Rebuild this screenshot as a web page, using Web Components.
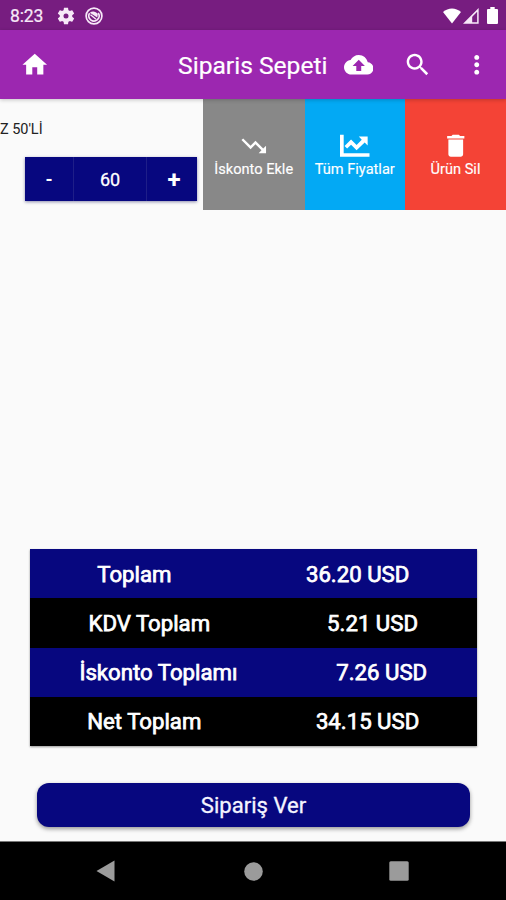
<!DOCTYPE html>
<html lang="tr">
<head>
<meta charset="utf-8">
<title>Siparis Sepeti</title>
<style>
  html, body {
    margin: 0;
    height: 100%;
    overflow: hidden;
    font-family: Roboto, "Liberation Sans", sans-serif;
    background: #fafafa;
  }
</style>
</head>
<body>
<siparis-app></siparis-app>

<template id="md-icon">
  <style>
    :host { display: block; flex: none; width: 29.5px; height: 29.5px; color: #fff; }
    svg { display: block; width: 100%; height: 100%; fill: currentColor; }
  </style>
  <svg viewBox="0 0 24 24"><path fill-rule="evenodd"></path></svg>
</template>

<template id="status-bar">
  <style>
    :host { display: flex; align-items: center; height: 30px; box-sizing: border-box; padding: 1px 8px 0 10px; background: #771d80; color: #f7e9f8; }
    .time { font-size: 17.5px; width: 46px; letter-spacing: -0.1px; -webkit-text-stroke: .2px #f7e9f8; }
    svg { display: block; flex: none; }
    md-icon { width: 20px; height: 20px; color: #f7e9f8; }
    .app { margin-left: 8.5px; }
    .wifi { margin-left: auto; }
    .signal { margin-left: 2px; }
    .battery { margin-left: 8px; }
  </style>
  <span class="time">8:23</span>
  <md-icon name="settings"></md-icon>
  <svg class="app" width="18" height="18" viewBox="0 0 18 18" fill="none" stroke="#f7e9f8">
    <circle cx="9" cy="9" r="7.9" stroke-width="1.7"/>
    <path d="M4.6 6.2a5.1 5.1 0 1 0 8.600-.2" stroke-width="1.6"/>
    <path d="M4.800 5.800c2.600-2.200 6-1.500 8 1.300l-.5 3.400z" fill="#f7e9f8" stroke="none"/>
    <path d="M5.500 7.800l5.500 4.400" stroke-width="1.400"/>
  </svg>
  <svg class="wifi" width="18" height="16" viewBox="0 0 18 16" fill="#fff"><path d="M9 15.600L0 4C5.200-.700 12.800-.700 18 4z"/></svg>
  <svg class="signal" width="16" height="16" viewBox="0 0 16 16"><path d="M14.900 1.900v13.200H1.700z" fill="none" stroke="#f7e9f8" stroke-width="1.500"/><path d="M9.200 7.600V15H2z" fill="#f7e9f8"/></svg>
  <svg class="battery" width="11" height="17" viewBox="0 0 11 17" fill="#fff"><path d="M3.300 0h4.400v2H10q1 0 1 1v13q0 1-1 1H1q-1 0-1-1V3q0-1 1-1h2.300z"/></svg>
</template>

<template id="app-bar">
  <style>
    :host { display: flex; align-items: center; height: 69px; box-sizing: border-box; padding: 0 14.5px 0 20px; background: #9c27b0; color: #fff; position: relative; z-index: 1; box-shadow: 0 1px 4px rgba(0,0,0,.22); }
    .title { flex: 1; text-align: right; font-size: 24.6px; line-height: 30px; padding-top: 2px; white-space: nowrap; -webkit-text-stroke: .2px #fff; }
    .upload { margin-left: 16px; }
    .search { margin-left: 29.5px; }
    .more { margin-left: 30px; }
  </style>
  <md-icon name="home"></md-icon>
  <span class="title"><slot></slot></span>
  <md-icon class="upload" name="cloud_upload"></md-icon>
  <md-icon class="search" name="search"></md-icon>
  <md-icon class="more" name="more_vert"></md-icon>
</template>

<template id="quantity-stepper">
  <style>
    :host { display: grid; grid-template-columns: 48px 74px 1fr; width: 172px; height: 44px; background: #07077f; color: #fff; box-shadow: 0 1px 3px rgba(7,7,80,.45); }
    span { display: flex; align-items: center; justify-content: center; font-size: 18px; -webkit-text-stroke: .3px #fff; }
    .value { border: solid #1e1e88; border-width: 0 1px; }
    .minus, .plus { font-weight: 700; -webkit-text-stroke: 0; }
    .plus { font-size: 24px; padding: 1px 0 0 4px; }
  </style>
  <span class="minus">-</span>
  <span class="value"><slot></slot></span>
  <span class="plus">+</span>
</template>

<template id="slide-action">
  <style>
    :host { display: flex; flex-direction: column; align-items: center; justify-content: center; box-sizing: border-box; height: 111px; color: #fff; background: var(--action-color); }
    span { font-size: 14.6px; line-height: 17px; padding-top: 1px; white-space: nowrap; -webkit-text-stroke: .15px #fff; }
  </style>
  <md-icon></md-icon>
  <span><slot></slot></span>
</template>

<template id="cart-item">
  <style>
    :host { display: grid; grid-template-columns: 203px 101.5px 100.5px 101px; height: 111px; overflow: hidden; }
    .name { display: block; margin-top: 22px; font-size: 14.5px; line-height: 18px; letter-spacing: -.05px; color: #222; white-space: nowrap; }
    quantity-stepper { margin: 18px 0 0 25px; }
  </style>
  <div class="product">
    <span class="name"><slot></slot></span>
    <quantity-stepper>60</quantity-stepper>
  </div>
  <slide-action icon="trending_down" style="--action-color:#888">İskonto Ekle</slide-action>
  <slide-action icon="chart_line" style="--action-color:#03a9f4">Tüm Fiyatlar</slide-action>
  <slide-action icon="delete" style="--action-color:#f44336">Ürün Sil</slide-action>
</template>

<template id="total-row">
  <style>
    :host { display: flex; align-items: center; justify-content: space-around; flex: 1; background: #000; color: #fff; font-size: 22.2px; -webkit-text-stroke: .75px #fff; white-space: nowrap; }
    :host([blue]) { background: #07077f; }
  </style>
  <slot name="label"></slot>
  <slot name="value"></slot>
</template>

<template id="order-button">
  <style>
    :host { display: flex; align-items: center; justify-content: center; box-sizing: border-box; height: 44px; border-radius: 12px; background: #07077f; color: #f4f4ff; font-size: 22.1px; -webkit-text-stroke: .3px #f4f4ff; box-shadow: 0 2px 4px rgba(0,0,0,.4); }
  </style>
  <slot></slot>
</template>

<template id="nav-bar">
  <style>
    :host { display: grid; grid-template-columns: 1fr auto 1fr; align-items: center; height: 59px; box-sizing: border-box; border-top: 1px solid #777; background: #000; }
    svg { display: block; fill: #9b9b9b; }
    .back { margin-left: 96px; }
    .recent { justify-self: end; margin-right: 97px; }
  </style>
  <svg class="back" width="19" height="22" viewBox="0 0 19 22"><path d="M18.500.500v21L.500 11z"/></svg>
  <svg width="19" height="19" viewBox="0 0 19 19"><circle cx="9.500" cy="9.500" r="9.300"/></svg>
  <svg class="recent" width="20" height="20" viewBox="0 0 20 20"><rect x=".3" y=".3" width="19.400" height="19.400" rx="1.500"/></svg>
</template>

<template id="siparis-app">
  <style>
    :host { display: flex; flex-direction: column; width: 506px; height: 900px; overflow: hidden; background: #fafafa; }
    .totals { display: flex; flex-direction: column; height: 197px; margin: auto 29.5px 37px 30px; box-shadow: 0 1px 2px rgba(0,0,0,.4); }
    order-button { margin: 0 36px 14px 37px; }
  </style>
  <status-bar></status-bar>
  <app-bar>Siparis Sepeti</app-bar>
  <cart-item>Z 50'Lİ</cart-item>
  <div class="totals">
    <total-row blue><span slot="label">Toplam</span><span slot="value">36.20 USD</span></total-row>
    <total-row><span slot="label">KDV Toplam</span><span slot="value">5.21 USD</span></total-row>
    <total-row blue><span slot="label">İskonto Toplamı</span><span slot="value">7.26 USD</span></total-row>
    <total-row><span slot="label">Net Toplam</span><span slot="value">34.15 USD</span></total-row>
  </div>
  <order-button>Sipariş Ver</order-button>
  <nav-bar></nav-bar>
</template>

<script>
  (function() {
    const ICONS = {
      home: 'M10 20v-6h4v6h5v-8h3L12 3 2 12h3v8z',
      cloud_upload: 'M19.35 10.04C18.67 6.59 15.64 4 12 4 9.11 4 6.6 5.64 5.35 8.04 2.34 8.36 0 10.91 0 14c0 3.31 2.69 6 6 6h13c2.76 0 5-2.24 5-5 0-2.64-2.05-4.78-4.65-4.96zM14 13v4h-4v-4H7l5-5 5 5h-3z',
      search: 'M15.5 14h-.79l-.28-.27C15.41 12.59 16 11.11 16 9.5 16 5.91 13.09 3 9.5 3S3 5.91 3 9.5 5.91 16 9.5 16c1.61 0 3.09-.59 4.23-1.57l.27.28v.79l5 4.99L20.49 19l-4.99-5zm-6 0C7.01 14 5 11.99 5 9.5S7.01 5 9.5 5 14 7.01 14 9.5 11.99 14 9.5 14z',
      more_vert: 'M12 8c1.1 0 2-.9 2-2s-.9-2-2-2-2 .9-2 2 .9 2 2 2zm0 2c-1.1 0-2 .9-2 2s.9 2 2 2 2-.9 2-2-.9-2-2-2zm0 6c-1.1 0-2 .9-2 2s.9 2 2 2 2-.9 2-2-.9-2-2-2z',
      settings: 'M19.43 12.98c.04-.32.07-.64.07-.98s-.03-.66-.07-.98l2.11-1.65c.19-.15.24-.42.12-.64l-2-3.46c-.12-.22-.39-.3-.61-.22l-2.49 1c-.52-.4-1.08-.73-1.69-.98l-.38-2.65C14.46 2.18 14.25 2 14 2h-4c-.25 0-.46.18-.49.42l-.38 2.65c-.61.25-1.17.59-1.69.98l-2.49-1c-.23-.09-.49 0-.61.22l-2 3.46c-.13.22-.07.49.12.64l2.11 1.65c-.04.32-.07.65-.07.98s.03.66.07.98l-2.11 1.65c-.19.15-.24.42-.12.64l2 3.46c.12.22.39.3.61.22l2.49-1c.52.4 1.08.73 1.69.98l.38 2.65c.03.24.24.42.49.42h4c.25 0 .46-.18.49-.42l.38-2.65c.61-.25 1.17-.59 1.69-.98l2.49 1c.23.09.49 0 .61-.22l2-3.46c.12-.22.07-.49-.12-.64l-2.11-1.65zM12 15a3 3 0 1 1 0-6 3 3 0 0 1 0 6z',
      trending_down: 'M16 18l2.290-2.290-4.880-4.880-4 4L2 7.410 3.410 6l6 6 4-4 6.300 6.290L22 12v6z',
      chart_line: 'M0 3h3v15h21v3H0zM15.300 4.500h7.200v7.200l-2.400-2.400-6.600 6.300L9 11.100l-3.200 3.200-2.100-2.100L9 6.900l4.500 4.500 4.200-4.200z',
      delete: 'M6 19c0 1.100.9 2 2 2h8c1.100 0 2-.9 2-2V7H6v12zM19 4h-3.500l-1-1h-5l-1 1H5v2h14V4z'
    };

    // Clones the template with the element's own tag name into its shadow root
    class TemplateElement extends HTMLElement {
      constructor() {
        super();
        const tmpl = document.getElementById(this.localName);
        this.attachShadow({mode: 'open'}).appendChild(document.importNode(tmpl.content, true));
      }
    }

    class MdIcon extends TemplateElement {
      static get observedAttributes() { return ['name']; }
      attributeChangedCallback(attr, old, val) {
        this.shadowRoot.querySelector('path').setAttribute('d', ICONS[val] || '');
      }
    }

    class SlideAction extends TemplateElement {
      connectedCallback() {
        this.shadowRoot.querySelector('md-icon').setAttribute('name', this.getAttribute('icon'));
      }
    }

    customElements.define('md-icon', MdIcon);
    customElements.define('slide-action', SlideAction);
    ['status-bar', 'app-bar', 'quantity-stepper', 'cart-item', 'total-row', 'order-button', 'nav-bar', 'siparis-app']
      .forEach(tag => customElements.define(tag, class extends TemplateElement {}));
  })();
</script>
</body>
</html>
